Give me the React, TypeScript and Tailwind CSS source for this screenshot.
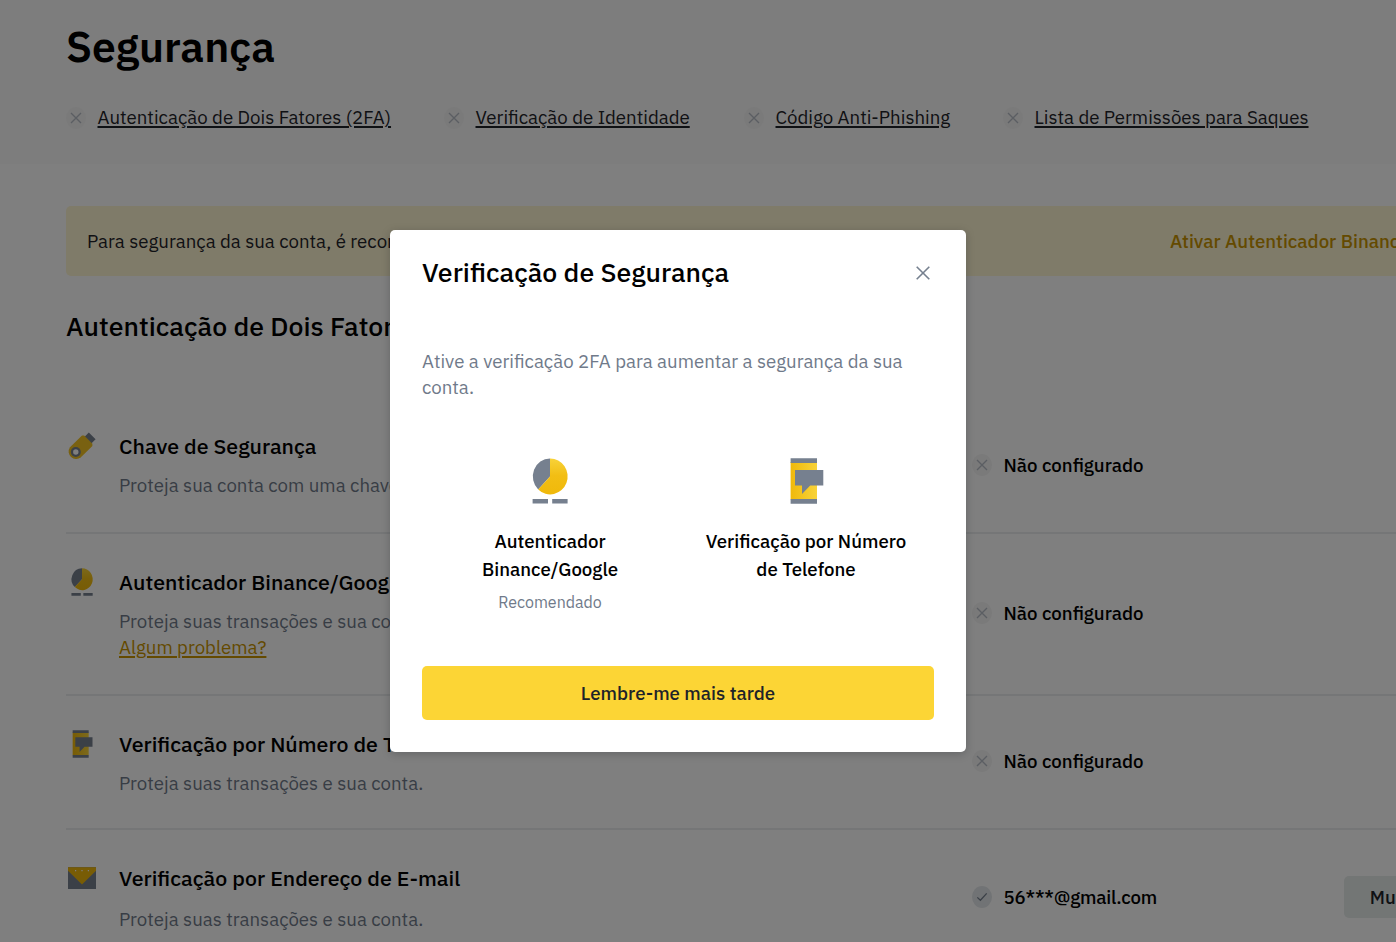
import { ReactNode } from "react";

const KeyIcon = () => (
    <svg width="32" height="32" viewBox="0 0 32 32" fill="none">
        <path d="M22.8 2.4L29.6 9.2L24.8 14L18.2 7.2Z" fill="#76808f" />
        <path d="M16 5.6H18.2L26.4 13.8V16L14.9 27.3A7.5 7.5 0 0 1 4 17.2Z" fill="#f2c223" />
        <circle cx="9.8" cy="22" r="5" fill="#76808f" />
        <circle cx="9.8" cy="22" r="2.7" fill="#ffffff" />
    </svg>
);

const AuthenticatorIcon = ({ className }: { className: string }) => (
    <svg className={className} viewBox="0 0 56 56" fill="none">
        <defs>
            <linearGradient id="pie" x1="28" y1="40" x2="28" y2="5" gradientUnits="userSpaceOnUse">
                <stop stopColor="#f0b90b" />
                <stop offset="0.5" stopColor="#f2be14" />
                <stop offset="1" stopColor="#f8d33a" />
            </linearGradient>
        </defs>
        <path d="M28 5.4V23.4L16.2 36.4A17.4 18 0 0 1 28 5.4Z" fill="#76808f" />
        <path d="M28 5.4A17.4 18 0 1 1 16.2 36.4L28 23.4Z" fill="url(#pie)" />
        <path d="M10.6 46H26V50.6H10.6ZM30.2 46H45.6V50.6H30.2Z" fill="#76808f" />
    </svg>
);

const PhoneIcon = ({ className }: { className: string }) => (
    <svg className={className} viewBox="0 0 56 56" fill="none">
        <defs>
            <linearGradient id="phone" x1="13" y1="28" x2="39" y2="28" gradientUnits="userSpaceOnUse">
                <stop stopColor="#f0b90b" />
                <stop offset="1" stopColor="#f8d33a" />
            </linearGradient>
        </defs>
        <path d="M12.6 9H39V46.5H12.6Z" fill="url(#phone)" />
        <path d="M12.6 5.2H39V10H12.6ZM12.6 46H39V50.8H12.6Z" fill="#76808f" />
        <path d="M17 17H45.3V32.4H32.2L24 41V32.4H17Z" fill="#76808f" />
    </svg>
);

const MailIcon = () => (
    <svg width="32" height="32" viewBox="0 0 32 32" fill="none">
        <path d="M2 5.2H30V27H2Z" fill="#76808f" />
        <path d="M2 5.2H30V8.8L16 22.6L2 8.8Z" fill="#f0b90b" />
        <path d="M9 8h1.2v1.2H9zM15.4 8h1.2v1.2h-1.2zM21.8 8H23v1.2h-1.2z" fill="#ffffff" />
    </svg>
);

const StatusMark = ({ checked = false }: { checked?: boolean }) => (
    <svg className="shrink-0" width="20" height="22" viewBox="0 0 20 22" fill="none">
        <ellipse cx="10" cy="11" rx="10" ry="11" fill={checked ? "#e3e7ea" : "#f5f5f5"} />
        {checked ? (
            <path d="M5.3 11.4L8.4 14.3L14.7 7.4" stroke="#76808f" strokeWidth="1.3" />
        ) : (
            <path d="M5 6L15 16M15 6L5 16" stroke="#b7bdc6" strokeWidth="1.4" />
        )}
    </svg>
);

const links = [
    { title: "Autenticação de Dois Fatores (2FA)", width: "w-[378px]" },
    { title: "Verificação de Identidade", width: "w-[300px]" },
    { title: "Código Anti-Phishing", width: "w-[259px]" },
    { title: "Lista de Permissões para Saques", width: "w-[320px]" },
];

type MethodProps = {
    icon: ReactNode;
    title: string;
    paragraph: string;
    paragraphClass?: string;
    help?: string;
    status: string;
    statusClass?: string;
    checked?: boolean;
    action?: string;
    height: string;
};

const methods: MethodProps[] = [
    {
        icon: <KeyIcon />,
        title: "Chave de Segurança",
        paragraph: "Proteja sua conta com uma chave de segurança.",
        status: "Não configurado",
        height: "h-[136px]",
    },
    {
        icon: <AuthenticatorIcon className="-m-px size-[34px]" />,
        title: "Autenticador Binance/Google",
        paragraph: "Proteja suas transações e sua conta.",
        help: "Algum problema?",
        status: "Não configurado",
        statusClass: "pb-0.5",
        height: "h-[162px]",
    },
    {
        icon: <PhoneIcon className="-m-px size-[34px]" />,
        title: "Verificação por Número de Telefone",
        paragraph: "Proteja suas transações e sua conta.",
        status: "Não configurado",
        statusClass: "pb-0.5",
        height: "h-[134px]",
    },
    {
        icon: <MailIcon />,
        title: "Verificação por Endereço de E-mail",
        paragraph: "Proteja suas transações e sua conta.",
        paragraphClass: "pt-0.5",
        status: "56***@gmail.com",
        statusClass: "tracking-[-0.2px]",
        checked: true,
        action: "Mudar",
        height: "h-[136px]",
    },
];

const Method = ({ icon, title, paragraph, paragraphClass = "", help, status, statusClass = "", checked, action, height }: MethodProps) => (
    <div className={`flex shrink-0 border-b-2 border-[#eaecef] ${height}`}>
        <div className="w-[53px] shrink-0 pt-8">{icon}</div>
        <div className="w-[853px] shrink-0 pt-[35px]">
            <h3 className="text-[21.33px] leading-[26px] font-medium text-black">{title}</h3>
            <p className={`mt-[13px] text-[18.67px] leading-[26px] text-[#707a8a] ${paragraphClass}`}>{paragraph}</p>
            {help && (
                <a href="#" className="block text-[18.67px] leading-[26px] text-[#c99400] underline decoration-2 underline-offset-2">
                    {help}
                </a>
            )}
        </div>
        <div className={`flex w-[372px] shrink-0 items-center gap-[11.5px] ${statusClass}`}>
            <StatusMark checked={checked} />
            <span className="text-[18.67px] font-medium text-black">{status}</span>
        </div>
        {action && (
            <button className="h-[42px] w-[106px] shrink-0 self-center rounded-[5px] bg-[#e6eceb] text-[18.67px] font-medium text-[#1e2329]">
                {action}
            </button>
        )}
    </div>
);

const SecurityModal = () => (
    <div className="absolute inset-0 flex justify-center bg-black/50 pt-[230px]">
        <div className="mr-[40px] flex h-[522px] w-[576px] flex-col rounded-[5px] bg-white px-8 shadow-[0_2px_8px_rgba(24,26,32,0.25)]">
            <div className="flex h-[86px] items-center justify-between">
                <h2 className="pb-0.5 text-[26.67px] font-medium text-black">Verificação de Segurança</h2>
                <svg className="mr-1" width="14" height="14" viewBox="0 0 14 14" fill="none">
                    <path d="M0.7 0.7L13.3 13.3M13.3 0.7L0.7 13.3" stroke="#76808f" strokeWidth="1.6" />
                </svg>
            </div>
            <p className="mt-8 h-[52px] text-[18.67px] leading-[26px] text-[#707a8a]">
                Ative a verificação 2FA para aumentar a segurança da sua conta.
            </p>
            <div className="mt-[53px] grid h-[213px] grid-cols-2">
                <div className="flex flex-col items-center text-center">
                    <AuthenticatorIcon className="size-14" />
                    <h3 className="mt-[18px] text-[18.67px] leading-[28px] font-medium text-black">
                        Autenticador
                        <br />
                        Binance/Google
                    </h3>
                    <span className="mt-[7px] text-[16px] leading-[24px] text-[#707a8a]">Recomendado</span>
                </div>
                <div className="flex flex-col items-center text-center">
                    <PhoneIcon className="size-14" />
                    <h3 className="mt-[18px] text-[18.67px] leading-[28px] font-medium text-black">
                        Verificação por Número
                        <br />
                        de Telefone
                    </h3>
                </div>
            </div>
            <button className="h-[54px] w-full rounded-[5px] bg-[#fcd535] text-[18.67px] font-medium text-[#1e2329]">
                Lembre-me mais tarde
            </button>
        </div>
    </div>
);

const App = () => {
    return (
        <div className="relative h-[942px] w-[1396px] overflow-hidden bg-white font-['IBM_Plex_Sans',Roboto,sans-serif]">
            <header className="h-[164px] bg-[#fafafa] pl-[66px]">
                <h1 className="pt-[17px] text-[42.67px] leading-[58px] font-semibold text-black">Segurança</h1>
                <nav className="mt-[29px] flex h-7">
                    {links.map((link) => (
                        <div key={link.title} className={`flex shrink-0 items-center gap-[11.5px] ${link.width}`}>
                            <StatusMark />
                            <a
                                href="#"
                                className="pb-0.5 text-[18.67px] whitespace-nowrap text-[#1e2329] underline decoration-2 underline-offset-2"
                            >
                                {link.title}
                            </a>
                        </div>
                    ))}
                </nav>
            </header>
            <main className="pt-[42px] pl-[66px]">
                <div className="flex h-[70px] w-[1400px] items-center rounded-[5px] bg-[#fef6d2] pl-[21px]">
                    <p className="w-[1083px] shrink-0 text-[18.67px] text-[#1e2329]">
                        Para segurança da sua conta, é recomendado ativar a 2FA.
                    </p>
                    <a href="#" className="shrink-0 text-[18.67px] font-medium text-[#c99400]">
                        Ativar Autenticador Binance/Google
                    </a>
                </div>
                <h2 className="mt-[33px] h-[89px] text-[26.67px] leading-[34px] font-medium text-black">
                    Autenticação de Dois Fatores (2FA)
                </h2>
                <div className="flex w-[1400px] flex-col">
                    {methods.map((method) => (
                        <Method key={method.title} {...method} />
                    ))}
                </div>
            </main>
            <SecurityModal />
        </div>
    );
};

export default App;
